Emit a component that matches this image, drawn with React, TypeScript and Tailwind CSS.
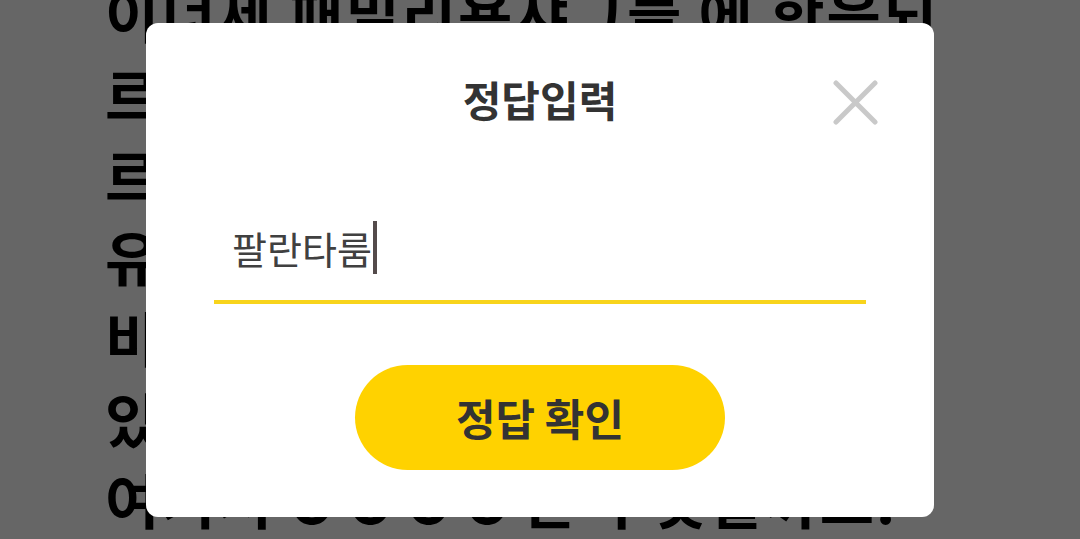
import React from "react";

export default function App() {
  return (
    <div
      className="relative w-[1080px] h-[539px] overflow-hidden bg-white"
      style={{ fontFamily: '"Noto Sans CJK KR", "Noto Sans", sans-serif' }}
    >
      <div className="mt-[-28px] pl-[105px] text-[59px] leading-[81px] font-bold text-black tracking-[2px] whitespace-nowrap">
        <div>이너제 패밀리용샤그들 에 항응되</div>
        <div>르네상스 시대의 미술과</div>
        <div>르포 형식으로 기록된</div>
        <div>유명한 작품이 전시된</div>
        <div>비밀스러운 공간이</div>
        <div>있습니다. 그렇다면</div>
        <div>
          여기서 <span className="tracking-[13px]">OOOO</span>은 무엇일까요.
        </div>
      </div>

      <div className="absolute inset-0 bg-black/60 flex items-center justify-center">
        <div className="relative w-[788px] h-[494px] bg-white rounded-[12px] flex flex-col items-center pt-[55px] pb-[47px]">
          <div className="h-[42px] leading-[42px] text-[42px] font-bold text-[#333333]">
            정답입력
          </div>
          <button className="absolute top-[57px] right-[56px] w-[45px] h-[45px]">
            <svg viewBox="0 0 45 45" className="w-[45px] h-[45px]">
              <path
                d="M3 3 L42 42 M42 3 L3 42"
                stroke="#c9c9c9"
                strokeWidth="5"
                strokeLinecap="round"
              />
            </svg>
          </button>

          <div className="mt-[80px] w-[652px] h-[104px] flex items-center pl-[18px] pb-[4px] border-b-[4px] border-[#f8d41c]">
            <span className="text-[38px] leading-[40px] text-[#404040]">팔란타룸</span>
            <span className="ml-[1px] w-[4px] h-[53px] bg-[#544b4b]" />
          </div>

          <button className="mt-[61px] w-[370px] h-[105px] rounded-full bg-[#ffd200] text-[43px] font-bold text-[#333333] leading-[43px] flex items-center justify-center">
            정답 확인
          </button>
        </div>
      </div>
    </div>
  );
}
